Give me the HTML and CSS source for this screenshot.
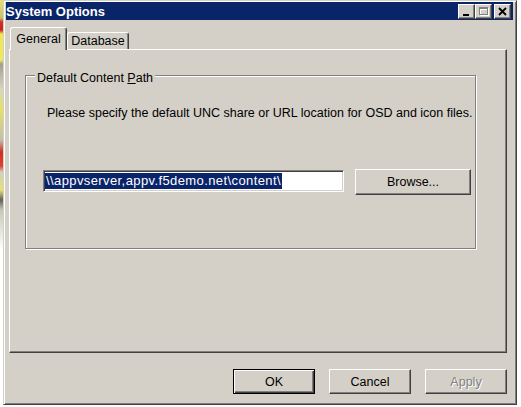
FILE: index.html
```html
<!DOCTYPE html>
<html>
<head>
<meta charset="utf-8">
<title>System Options</title>
<link rel="stylesheet" href="styles.css">
</head>
<body>
<div class="screen">
  <div class="backdrop-strip"></div>
  <div class="window">
    <div class="titlebar">
      <span class="title">System Options</span>
      <div class="caption-buttons">
        <div class="cap">
          <svg width="15" height="13" viewBox="0 0 15 13"><rect x="4" y="9" width="6" height="2" fill="#000"/></svg>
        </div>
        <div class="cap">
          <svg width="15" height="13" viewBox="0 0 15 13">
            <path d="M4 3h9v8h-9z M5 5v5h7v-5z" fill="#fff" fill-rule="evenodd"/>
            <path d="M3 2h9v8h-9z M4 4v5h7v-5z" fill="#808080" fill-rule="evenodd"/>
          </svg>
        </div>
        <div class="cap close">
          <svg width="15" height="13" viewBox="0 0 15 13"><path d="M4 3l7 7M11 3l-7 7" stroke="#000" stroke-width="1.8" fill="none"/></svg>
        </div>
      </div>
    </div>
    <div class="tabs">
      <div class="tab active">General</div>
      <div class="tab">Database</div>
    </div>
    <div class="tabpage">
      <div class="group">
        <span class="group-label">Default Content <u>P</u>ath</span>
        <p class="desc">Please specify the default UNC share or URL location for OSD and icon files.</p>
        <div class="path-row">
          <div class="textbox"><span class="sel">\\appvserver,appv.f5demo.net\content\</span></div>
          <div class="btn browse">Browse...</div>
        </div>
      </div>
    </div>
    <div class="footer">
      <div class="btn default">OK</div>
      <div class="btn">Cancel</div>
      <div class="btn disabled">Apply</div>
    </div>
  </div>
</div>
</body>
</html>
```

FILE: styles.css
```css
* { box-sizing: border-box; }
html, body { margin: 0; padding: 0; }
body {
  width: 521px;
  height: 407px;
  overflow: hidden;
  background: #ffffff;
  font-family: "Liberation Sans", Arial, sans-serif;
  font-size: 12px;
  color: #000;
}
.screen { display: flex; align-items: flex-start; height: 407px; }
.backdrop-strip {
  width: 3px;
  height: 250px;
  background: linear-gradient(to bottom,
    #e8e070 0px, #c8c070 18px, #d03020 22px, #d02020 30px, #f0e850 34px, #f0e860 60px,
    #a0a090 64px, #d8d8c0 90px, #e8e060 110px, #c0c0b0 140px, #d03020 152px, #e04030 166px,
    #d0d0c0 172px, #e8e070 190px, #606060 200px, #c8c8b8 210px, #ffffff 250px);
}
.window {
  width: 514px;
  height: 405px;
  background: #d4d0c8;
  border: 1px solid;
  border-color: #d4d0c8 #404040 #404040 #d4d0c8;
  box-shadow: inset 1px 1px #fff, inset -1px -1px #808080;
  padding: 1px 2px 2px 2px;
  display: flex;
  flex-direction: column;
}
.titlebar {
  height: 18px;
  background: #0a246a;
  color: #fff;
  display: flex;
  align-items: center;
  justify-content: space-between;
  padding: 0 2px 0 0;
  margin-right: 1px;
}
.title { font-weight: bold; font-size: 13px; }
.caption-buttons { display: flex; align-items: center; }
.cap {
  width: 17px;
  height: 15px;
  background: #d4d0c8;
  border: 1px solid;
  border-color: #fff #404040 #404040 #fff;
  box-shadow: inset -1px -1px #808080;
  display: flex;
  align-items: center;
  justify-content: center;
}
.cap svg { display: block; }
.cap.close { margin-left: 2px; }
.tabs {
  height: 29px;
  display: flex;
  align-items: flex-end;
  padding-left: 4px;
}
.tab {
  height: 17px;
  width: 62px;
  border: 1px solid;
  border-bottom: none;
  border-color: #fff #404040 transparent #fff;
  box-shadow: inset -1px 0 #808080;
  border-radius: 3px 3px 0 0;
  display: flex;
  align-items: center;
  justify-content: center;
  background: #d4d0c8;
  font-size: 12.5px;
}
.tab.active {
  width: 57px;
  height: 23px;
  margin-bottom: -1px;
  position: relative;
  z-index: 1;
  align-items: flex-start;
  padding-top: 4px;
}
.tabpage {
  margin-left: 3px;
  width: 498px;
  height: 304px;
  border: 1px solid;
  border-color: #fff #404040 #404040 #fff;
  box-shadow: inset -1px -1px #808080;
  padding: 25px 30px 0 15px;
}
.group {
  height: 174px;
  border: 1px solid #808080;
  box-shadow: inset 1px 1px #fff, 1px 1px #fff;
}
.group-label {
  display: inline-block;
  vertical-align: top;
  margin: -5px 0 0 9px;
  padding: 0 2px;
  line-height: 14px;
  background: #d4d0c8;
  font-size: 12.5px;
}
.desc {
  margin: 16px 0 0 21px;
  line-height: 14px;
  font-size: 12.5px;
}
.path-row {
  display: flex;
  align-items: flex-start;
  margin: 49px 0 0 17px;
  gap: 11px;
}
.textbox {
  width: 301px;
  height: 22px;
  margin-top: 1px;
  background: #fff;
  border: 1px solid;
  border-color: #808080 #fff #fff #808080;
  box-shadow: inset 1px 1px #404040, inset -1px -1px #d4d0c8;
  padding: 2px 0 0 1px;
}
.sel {
  display: inline-block;
  background: #0a246a;
  color: #fff;
  line-height: 16px;
  padding: 0 1px;
  font-size: 13px;
  letter-spacing: 0.4px;
}
.btn {
  width: 82px;
  height: 25px;
  border: 1px solid;
  border-color: #fff #404040 #404040 #fff;
  box-shadow: inset -1px -1px #808080;
  display: flex;
  align-items: center;
  justify-content: center;
  background: #d4d0c8;
  font-size: 12.5px;
}
.btn.browse { width: 116px; height: 26px; }
.btn.default {
  border: 1px solid #000;
  box-shadow: inset 1px 1px #fff, inset -1px -1px #404040, inset -2px -2px #808080;
}
.btn.disabled { color: #808080; text-shadow: 1px 1px #fff; }
.footer {
  display: flex;
  justify-content: flex-end;
  gap: 14px;
  padding: 16px 7px 0 0;
}
```
